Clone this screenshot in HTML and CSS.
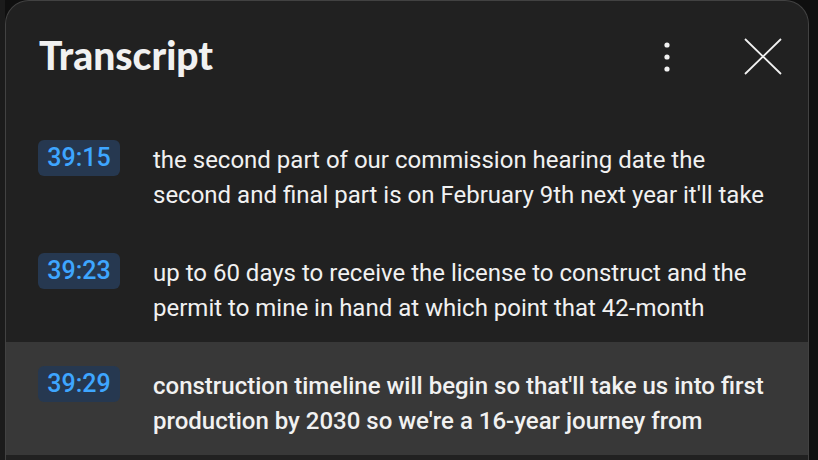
FILE: index.html
```html
<!DOCTYPE html>
<html>
<head>
<meta charset="utf-8">
<link rel="stylesheet" href="styles.css">
</head>
<body>
<div class="page">
  <div class="strip"></div>
  <section class="panel">
    <header class="head">
      <h1 class="title">Transcript</h1>
      <div class="actions">
        <button class="icon-btn more" aria-label="More">
          <svg width="8" height="30" viewBox="0 0 8 30"><circle cx="4" cy="3" r="2.6" fill="#f1f1f1"/><circle cx="4" cy="15" r="2.6" fill="#f1f1f1"/><circle cx="4" cy="27" r="2.6" fill="#f1f1f1"/></svg>
        </button>
        <button class="icon-btn close" aria-label="Close">
          <svg width="38" height="37" viewBox="0 0 38 37"><path d="M1 1 L37 36 M37 1 L1 36" stroke="#f1f1f1" stroke-width="1.8" fill="none"/></svg>
        </button>
      </div>
    </header>
    <div class="list">
      <div class="row">
        <span class="stamp">39:15</span>
        <p class="text">the second part of our commission hearing date the second and final part is on February 9th next year it'll take</p>
      </div>
      <div class="row">
        <span class="stamp">39:23</span>
        <p class="text">up to 60 days to receive the license to construct and the permit to mine in hand at which point that 42-month</p>
      </div>
      <div class="row active">
        <span class="stamp">39:29</span>
        <p class="text">construction timeline will begin so that'll take us into first production by 2030 so we're a 16-year journey from</p>
      </div>
    </div>
  </section>
</div>
</body>
</html>
```
FILE: styles.css
```css
* { box-sizing: border-box; }
html, body { margin: 0; padding: 0; height: 100%; }
body {
  background: #0f0f0f;
  overflow: hidden;
  font-family: Roboto, "Liberation Sans", sans-serif;
}
.page { display: flex; height: 100%; }
.strip { width: 5px; flex: none; background: #1b1b1b; }
.panel {
  width: 804px;
  flex: none;
  background: #212121;
  border: 1px solid #424242;
  border-bottom: none;
  border-radius: 24px 24px 0 0;
  height: 700px;
}
.head {
  height: 115px;
  display: flex;
  align-items: flex-start;
  justify-content: space-between;
  padding: 0 26px 0 33px;
}
.title {
  margin: 30px 0 0;
  font-family: Lato, "Open Sans", sans-serif;
  font-weight: 900;
  font-size: 39px;
  letter-spacing: 0;
  color: #f1f1f1;
  line-height: 48px;
}
.actions { display: flex; align-items: flex-start; margin-top: 37px; }
.icon-btn {
  background: none; border: none; padding: 0; margin: 0;
  display: block; cursor: pointer;
}
.icon-btn svg { display: block; }
.more { margin-top: 4px; margin-right: 73px; }
.list { display: flex; flex-direction: column; }
.row {
  height: 113px;
  display: flex;
  align-items: flex-start;
  padding: 24px 20px 0 32px;
}
.row.active { background: #383838; }
.stamp {
  flex: none;
  width: 82px;
  height: 36px;
  border-radius: 6px;
  background: #263850;
  color: #3ea6ff;
  font-size: 25px;
  font-weight: 500;
  line-height: 36px;
  text-align: center;
  margin-right: 33px;
}
.text {
  margin: 3px 0 0;
  color: #f1f1f1;
  font-size: 24px;
  line-height: 35px;
  max-width: 622px;
}
.active .text { font-weight: 500; }
```
